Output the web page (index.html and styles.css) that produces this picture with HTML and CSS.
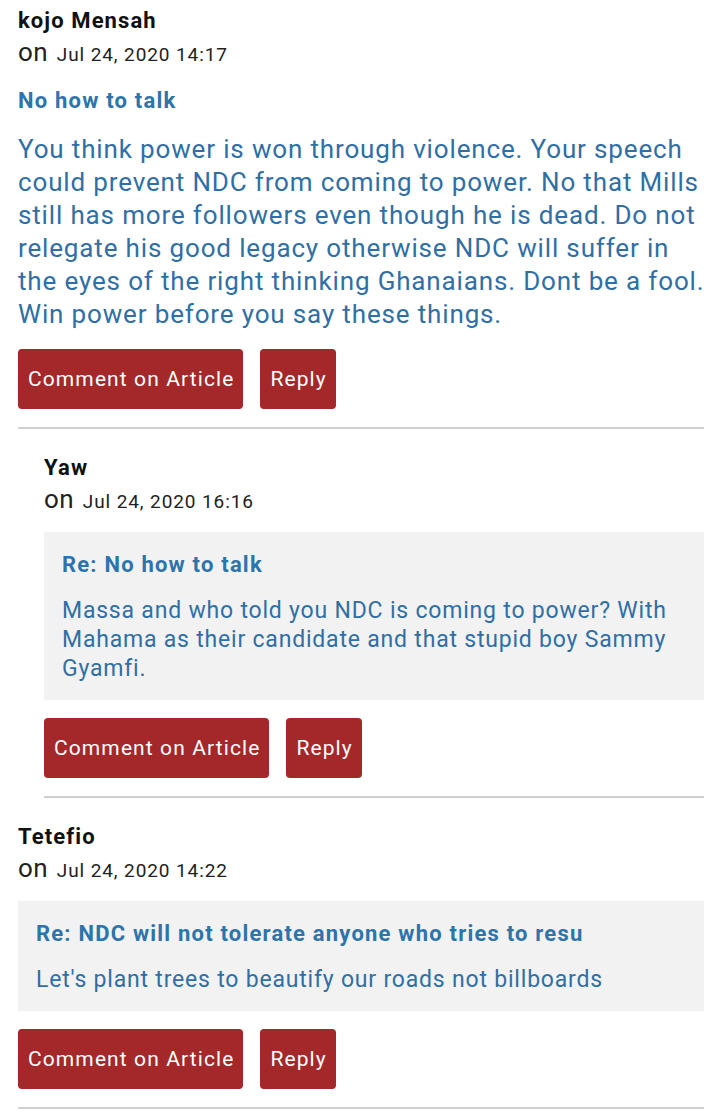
FILE: index.html
```html
<!DOCTYPE html>
<html lang="en">
<head>
<meta charset="utf-8">
<title>Comments</title>
<link rel="stylesheet" href="styles.css">
</head>
<body>
<div class="thread">
  <div class="comment first">
    <div class="name">kojo Mensah</div>
    <div class="date"><span class="on">on</span> Jul 24, 2020 14:17</div>
    <div class="title">No how to talk</div>
    <p class="text">You think power is won through violence. Your speech could prevent NDC from coming to power. No that Mills still has more followers even though he is dead. Do not relegate his good legacy otherwise NDC will suffer in the eyes of the right thinking Ghanaians. Dont be a fool. Win power before you say these things.</p>
    <div class="actions"><button class="btn">Comment on Article</button><button class="btn">Reply</button></div>
    <div class="divider"></div>
  </div>
  <div class="comment reply">
    <div class="name">Yaw</div>
    <div class="date"><span class="on">on</span> Jul 24, 2020 16:16</div>
    <div class="box">
      <div class="box-title">Re: No how to talk</div>
      <p class="box-text">Massa and who told you NDC is coming to power? With Mahama as their candidate and that stupid boy Sammy Gyamfi.</p>
    </div>
    <div class="actions"><button class="btn">Comment on Article</button><button class="btn">Reply</button></div>
    <div class="divider"></div>
  </div>
  <div class="comment">
    <div class="name">Tetefio</div>
    <div class="date"><span class="on">on</span> Jul 24, 2020 14:22</div>
    <div class="box">
      <div class="box-title">Re: NDC will not tolerate anyone who tries to resu</div>
      <p class="box-text">Let's plant trees to beautify our roads not billboards</p>
    </div>
    <div class="actions"><button class="btn">Comment on Article</button><button class="btn">Reply</button></div>
    <div class="divider"></div>
  </div>
</div>
</body>
</html>
```
FILE: styles.css
```css
html, body {
  margin: 0;
  padding: 0;
  background: #ffffff;
}
body {
  font-family: Roboto, "Liberation Sans", Arial, sans-serif;
  color: #111111;
}
.thread {
  padding: 0 16px 0 18px;
}
.comment {
  padding-top: 24px;
}
.comment.first {
  padding-top: 6px;
}
.comment.reply {
  margin-left: 26px;
}
.name {
  font-size: 22px;
  font-weight: 700;
  line-height: 30px;
  letter-spacing: 1.1px;
  color: #111111;
}
.date {
  height: 32px;
  font-size: 19px;
  line-height: 38px;
  letter-spacing: 0.9px;
  color: #222222;
}
.on {
  font-size: 26px;
  line-height: 20px;
  letter-spacing: 0.5px;
  margin-right: 3px;
}
.title {
  margin-top: 18px;
  font-size: 22px;
  font-weight: 700;
  line-height: 30px;
  letter-spacing: 1.2px;
  color: #2d74ab;
}
.text {
  margin: 17px -8px 0 0;
  font-size: 26px;
  line-height: 33px;
  letter-spacing: 0.85px;
  color: #2f6fa6;
}
.box {
  margin-top: 17px;
  background: #f2f2f2;
  padding: 18px 18px 17px;
}
.box-title {
  font-size: 22px;
  font-weight: 700;
  line-height: 30px;
  letter-spacing: 1.2px;
  color: #2d74ab;
}
.box-text {
  margin: 16px 0 0;
  font-size: 23px;
  line-height: 29px;
  letter-spacing: 0.8px;
  color: #2f6fa6;
}
.actions {
  margin-top: 18px;
  display: flex;
  gap: 17px;
}
.btn {
  height: 60px;
  padding: 0 9px 0 10px;
  border: none;
  border-radius: 4px;
  background: #a4282a;
  color: #ffffff;
  font-family: Roboto, "Liberation Sans", Arial, sans-serif;
  font-size: 21px;
  letter-spacing: 1.1px;
}
.divider {
  margin-top: 18px;
  border-top: 2px solid #d0d0d0;
}
```
